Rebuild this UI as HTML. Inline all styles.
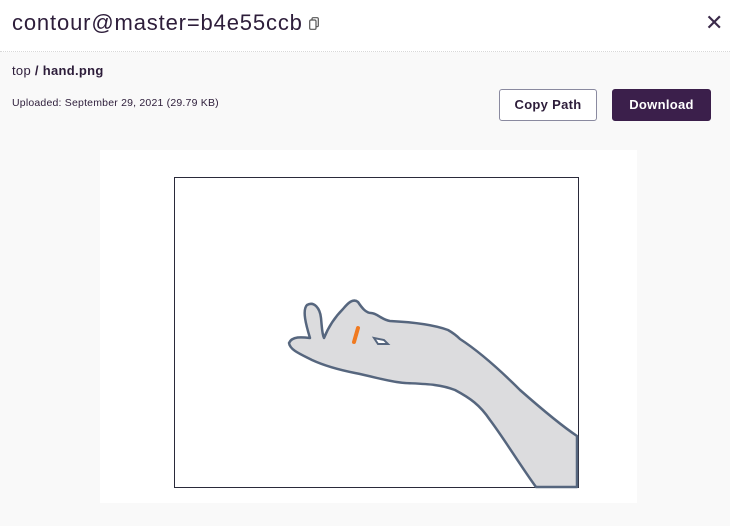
<!DOCTYPE html>
<html><head><meta charset="utf-8"><style>
*{margin:0;padding:0;box-sizing:border-box}
body{width:730px;height:526px;background:#f9f9f9;font-family:"Liberation Sans",sans-serif;color:#2d1d3a;position:relative;overflow:hidden}
.hdr{position:absolute;left:0;top:0;width:730px;height:52px;background:#fff;border-bottom:1px dotted #d8d8d8}
.title{position:absolute;left:12px;top:10px;font-size:22px;color:#2d1d3a;letter-spacing:0.85px}
.copy{position:absolute;left:309px;top:17px;width:10px;height:13px}
.x{position:absolute;left:705px;top:10px;font-size:22px;color:#3b2a4a}
.crumb{position:absolute;left:12px;top:63px;font-size:13px;font-weight:bold;color:#2d1d3a;letter-spacing:0.3px}
.up{position:absolute;left:12px;top:97px;font-size:10.5px;color:#2d1d3a;letter-spacing:0.2px}
.btn{position:absolute;top:89px;height:32px;border-radius:3px;font-size:13px;font-weight:bold;text-align:center;line-height:30px;letter-spacing:0.3px}
.b1{left:499px;width:98px;background:#fff;border:1px solid #8a8aa0;color:#2d1d3a}
.b2{left:612px;width:99px;background:#3b1f4b;border:1px solid #3b1f4b;color:#fff}
.panel{position:absolute;left:100px;top:150px;width:537px;height:353px;background:#fff}
</style></head><body>
<div class="hdr">
<div class="title">contour@master=b4e55ccb</div>
<svg class="copy" viewBox="0 0 10 13"><rect x="3" y="0.7" width="6.3" height="9" rx="1.2" fill="none" stroke="#555" stroke-width="1.2"/><rect x="0.7" y="3" width="6.3" height="9.3" rx="1.2" fill="#fff" stroke="#555" stroke-width="1.2"/></svg>
<div class="x">✕</div>
</div>
<div class="crumb"><span style="font-weight:normal">top</span> / hand.png</div>
<div class="up">Uploaded: September 29, 2021 (29.79 KB)</div>
<div class="btn b1">Copy Path</div>
<div class="btn b2">Download</div>
<div class="panel"></div>
<svg style="position:absolute;left:0;top:0" width="730" height="526">
<rect x="174.5" y="177.5" width="404" height="310" fill="#fff" stroke="#2a2a3a" stroke-width="1"/>
<path d="M289,343 C292,336 302,337 310,338 C306,325 302,310 307,305 C314,301 320,308 321,318 C322,328 322,334 324,338 C328,328 334,318 343,309 C348,303 353,298 358,302 C362,308 366,313 371,313 C377,313 382,320 390,321 C410,322 432,324 448,330 C455,334 458,337 460,339 C480,352 500,370 520,390 C545,412 565,428 577,436 L577,487 L536,487 C520,465 505,440 490,420 C480,405 470,398 455,390 C440,384 425,384 405,383 C390,382 375,377 355,373 C340,370 325,366 312,360 C300,354 290,350 289,343 Z" fill="#dcdcde" stroke="#56667e" stroke-width="2.5" stroke-linejoin="round"/>
<path d="M374,338 L384,340 L388,344 L378,344 Z" fill="#fff" stroke="#56667e" stroke-width="2"/>
<path d="M358,328 L354,342" stroke="#f07a20" stroke-width="4" stroke-linecap="round"/>
</svg>
</body></html>
